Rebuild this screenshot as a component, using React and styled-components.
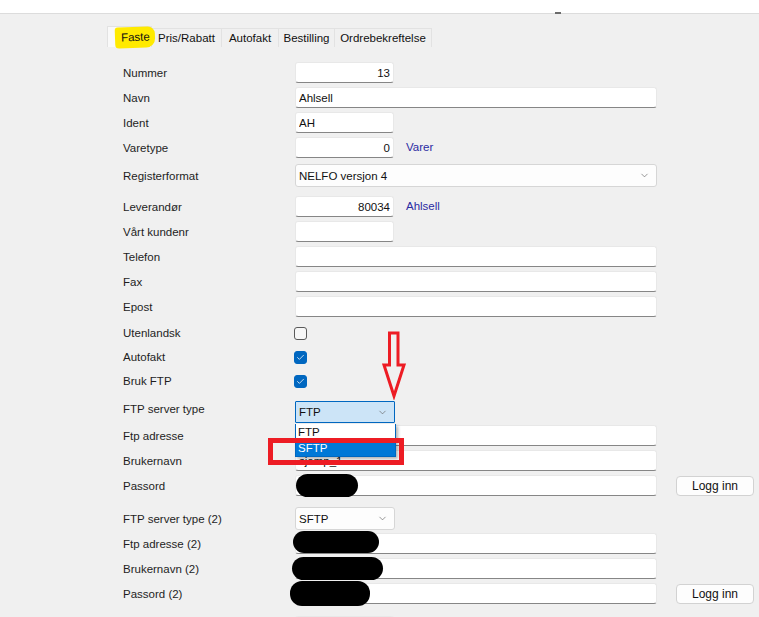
import React from 'react';
import styled, { createGlobalStyle } from 'styled-components';
import { ChevronDown, Check } from 'lucide-react';

const GlobalStyle = createGlobalStyle`
  body {
    margin: 0;
    background: #f0f0f0;
    font-family: "Liberation Sans", Arial, sans-serif;
    font-size: 11.5px;
    color: #1e1e1e;
  }
`;

const TopStrip = styled.div`
  height: 13px;
  background: #ffffff;
  border-bottom: 1px solid #dcdcdc;
  position: relative;
`;

const Grip = styled.span`
  position: absolute;
  left: 555px;
  bottom: -1px;
  width: 6px;
  height: 2px;
  background: #6b6b6b;
`;

const Main = styled.div`
  padding-left: 107px;
`;

const Tabs = styled.div`
  display: flex;
  align-items: flex-end;
  margin-top: 13px;
  height: 20px;
`;

const Tab = styled.div`
  box-sizing: border-box;
  width: ${p => p.$w}px;
  height: ${p => (p.$active ? 21 : 19)}px;
  padding: ${p => (p.$active ? '0 1px 0 7px' : '0')};
  display: flex;
  align-items: center;
  justify-content: ${p => (p.$active ? 'flex-start' : 'center')};
  background: ${p => (p.$active ? '#f9f9f9' : '#f0f0f0')};
  border: 1px solid #e2e2e2;
  border-left: ${p => (p.$active ? '1px solid #e2e2e2' : 'none')};
  border-bottom: none;
  font-size: 11.5px;
  color: #111;
  white-space: nowrap;
`;

const Marker = styled.span`
  display: inline-block;
  background: #ffea00;
  padding: 4px 5px 5px 6px;
  border-radius: 3px 7px 9px 4px;
  transform: rotate(-2deg);
`;

const Form = styled.div`
  padding-left: 16px;
  padding-top: 15px;
`;

const Row = styled.div`
  display: flex;
  align-items: center;
  height: ${p => p.$h}px;
  margin-top: ${p => p.$gap}px;
`;

const Label = styled.div`
  width: 172px;
  flex-shrink: 0;
  margin-bottom: ${p => p.$up || 0}px;
  white-space: nowrap;
`;

const Field = styled.div`
  position: relative;
  display: flex;
`;

const TextBox = styled.input`
  box-sizing: border-box;
  width: ${p => (p.$wide ? 362 : 99)}px;
  height: 21px;
  margin: 0;
  padding: 0 3px;
  background: #ffffff;
  border: 1px solid #e8e8e8;
  border-bottom: 1px solid #868686;
  border-radius: 3px;
  font: inherit;
  color: #111;
  text-align: ${p => (p.$right ? 'right' : 'left')};
  outline: none;
`;

const Redact = styled.span`
  position: absolute;
  left: ${p => p.$x}px;
  top: ${p => p.$y}px;
  width: ${p => p.$w}px;
  height: ${p => p.$h}px;
  background: #000;
  border-radius: 12px;
`;

const Select = styled.div`
  box-sizing: border-box;
  width: ${p => (p.$wide ? 362 : 100)}px;
  height: ${p => p.$h || 23}px;
  padding: 0 6px 0 3px;
  display: flex;
  align-items: center;
  justify-content: space-between;
  background: ${p => (p.$open ? '#cce4f7' : '#fdfdfd')};
  border: 1px solid ${p => (p.$open ? '#0067c0' : '#d6d6d6')};
  border-radius: ${p => (p.$open ? 1 : 3)}px;
  color: #111;
`;

const SelectWrap = styled.div`
  position: relative;
`;

const DropList = styled.div`
  position: absolute;
  left: 0;
  top: 100%;
  margin-top: 1px;
  width: 101px;
  box-sizing: border-box;
  background: #fff;
  border: 1px solid #0067c0;
  border-top: none;
  box-shadow: 2px 2px 3px rgba(0, 0, 0, 0.3);
  z-index: 5;
`;

const Option = styled.div`
  height: 16px;
  display: flex;
  align-items: center;
  padding-left: 2px;
  background: ${p => (p.$hl ? '#0078d7' : '#fff')};
  color: ${p => (p.$hl ? '#fff' : '#111')};
`;

const RedBox = styled.div`
  position: absolute;
  left: -27px;
  top: 37px;
  width: 136px;
  height: 27px;
  box-sizing: border-box;
  border: 5px solid #ed1c24;
  z-index: 6;
`;

const Arrow = styled.svg`
  position: absolute;
  left: 86px;
  top: -71px;
  z-index: 6;
`;

const Box = styled.span`
  box-sizing: border-box;
  width: 13px;
  height: 13px;
  border-radius: 3px;
  display: flex;
  align-items: center;
  justify-content: center;
  background: ${p => (p.$on ? '#0067c0' : '#f7f7f7')};
  border: 1px solid ${p => (p.$on ? '#0067c0' : '#5a5a5a')};
  margin-left: -1px;
`;

const Note = styled.span`
  margin-left: 12px;
  color: #2b2ba3;
  margin-bottom: ${p => p.$up || 0}px;
`;

const Button = styled.button`
  margin-left: 19px;
  width: 78px;
  height: 20px;
  padding: 0;
  background: #fdfdfd;
  border: 1px solid #d2d2d2;
  border-radius: 4px;
  font: inherit;
  font-size: 12px;
  color: #111;
`;

const Chevron = () => <ChevronDown size={11} strokeWidth={1.4} color="#5f5f5f" />;

function Input({ value = '', wide, right, redact }) {
  return (
    <Field>
      <TextBox readOnly value={value} $wide={wide} $right={right} />
      {redact && <Redact $x={redact[0]} $y={redact[1]} $w={redact[2]} $h={redact[3]} />}
    </Field>
  );
}

function Checkbox({ on }) {
  return <Box $on={on}>{on && <Check size={9} strokeWidth={2} color="#fff" />}</Box>;
}

export default function App() {
  return (
    <>
      <GlobalStyle />
      <TopStrip>
        <Grip />
      </TopStrip>
      <Main>
        <Tabs>
          <Tab $active $w={45}>
            <Marker>Faste</Marker>
          </Tab>
          <Tab $w={70}>Pris/Rabatt</Tab>
          <Tab $w={57}>Autofakt</Tab>
          <Tab $w={56}>Bestilling</Tab>
          <Tab $w={97}>Ordrebekreftelse</Tab>
        </Tabs>
        <Form>
          <Row $h={21} $gap={0}>
            <Label>Nummer</Label>
            <Input value="13" right />
          </Row>
          <Row $h={21} $gap={4}>
            <Label>Navn</Label>
            <Input value="Ahlsell" wide />
          </Row>
          <Row $h={21} $gap={4}>
            <Label>Ident</Label>
            <Input value="AH" />
          </Row>
          <Row $h={21} $gap={4}>
            <Label>Varetype</Label>
            <Input value="0" right />
            <Note $up={2}>Varer</Note>
          </Row>
          <Row $h={23} $gap={6}>
            <Label>Registerformat</Label>
            <Select $wide>
              NELFO versjon 4
              <Chevron />
            </Select>
          </Row>
          <Row $h={21} $gap={9}>
            <Label>Leverandør</Label>
            <Input value="80034" right />
            <Note $up={2}>Ahlsell</Note>
          </Row>
          <Row $h={21} $gap={4}>
            <Label>Vårt kundenr</Label>
            <Input />
          </Row>
          <Row $h={21} $gap={4}>
            <Label>Telefon</Label>
            <Input wide />
          </Row>
          <Row $h={21} $gap={4}>
            <Label>Fax</Label>
            <Input wide />
          </Row>
          <Row $h={21} $gap={4}>
            <Label>Epost</Label>
            <Input wide />
          </Row>
          <Row $h={24} $gap={4}>
            <Label>Utenlandsk</Label>
            <Checkbox />
          </Row>
          <Row $h={24} $gap={0}>
            <Label>Autofakt</Label>
            <Checkbox on />
          </Row>
          <Row $h={24} $gap={0}>
            <Label>Bruk FTP</Label>
            <Checkbox on />
          </Row>
          <Row $h={22} $gap={8}>
            <Label $up={7}>FTP server type</Label>
            <SelectWrap>
              <Select $open $h={22}>
                FTP
                <Chevron />
              </Select>
              <DropList>
                <Option>FTP</Option>
                <Option $hl>SFTP</Option>
              </DropList>
              <Arrow width="26" height="70" viewBox="0 0 26 70">
                <path
                  d="M8.5 3 H17 V35 H23 L13 66 L3 35 H8.5 Z"
                  fill="none"
                  stroke="#ed1c24"
                  strokeWidth="3"
                />
              </Arrow>
              <RedBox />
            </SelectWrap>
          </Row>
          <Row $h={21} $gap={2}>
            <Label>Ftp adresse</Label>
            <Input wide />
          </Row>
          <Row $h={21} $gap={4}>
            <Label>Brukernavn</Label>
            <Input value="sjemp_1" wide />
          </Row>
          <Row $h={21} $gap={4}>
            <Label>Passord</Label>
            <Input wide redact={[1, -1, 62, 23]} />
            <Button>Logg inn</Button>
          </Row>
          <Row $h={23} $gap={11}>
            <Label>FTP server type (2)</Label>
            <Select>
              SFTP
              <Chevron />
            </Select>
          </Row>
          <Row $h={21} $gap={3}>
            <Label>Ftp adresse (2)</Label>
            <Input wide redact={[-2, -2, 86, 22]} />
          </Row>
          <Row $h={21} $gap={4}>
            <Label>Brukernavn (2)</Label>
            <Input wide redact={[-3, -1, 91, 23]} />
          </Row>
          <Row $h={21} $gap={4}>
            <Label>Passord (2)</Label>
            <Input wide redact={[-5, -2, 80, 25]} />
            <Button>Logg inn</Button>
          </Row>
          <Row $h={21} $gap={12}>
            <Label />
            <Input />
          </Row>
        </Form>
      </Main>
    </>
  );
}
